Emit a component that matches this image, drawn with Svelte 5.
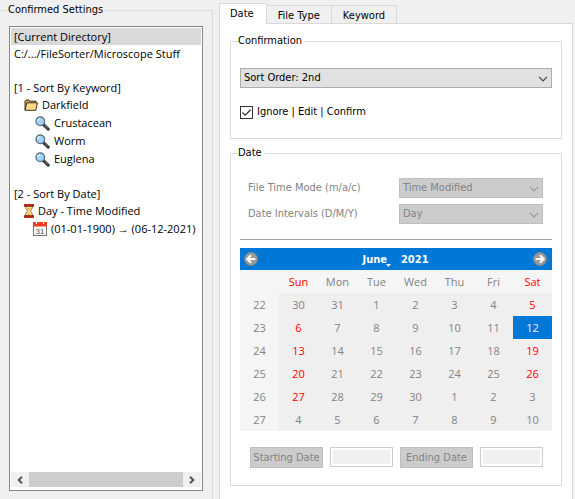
<script>
  const tree = [
    { text: '[Current Directory]', selected: true },
    { text: 'C:/.../FileSorter/Microscope Stuff' },
    { text: '' },
    { text: '[1 - Sort By Keyword]' },
    { text: 'Darkfield', icon: 'folder', level: 1 },
    { text: 'Crustacean', icon: 'search', level: 2 },
    { text: 'Worm', icon: 'search', level: 2 },
    { text: 'Euglena', icon: 'search', level: 2 },
    { text: '' },
    { text: '[2 - Sort By Date]' },
    { text: 'Day - Time Modified', icon: 'hourglass', level: 1 },
    { text: '(01-01-1900) → (06-12-2021)', icon: 'calendar', level: 2 }
  ];
  const tabs = ['Date', 'File Type', 'Keyword'];
  let activeTab = $state('Date');
  let confirmed = $state(true);

  const dayNames = ['Sun', 'Mon', 'Tue', 'Wed', 'Thu', 'Fri', 'Sat'];
  const first = new Date(2021, 4, 30);
  const weeks = Array.from({ length: 6 }, (_, w) => ({
    number: 22 + w,
    days: Array.from({ length: 7 }, (_, d) => {
      const date = new Date(first.getFullYear(), first.getMonth(), first.getDate() + w * 7 + d);
      const inMonth = date.getMonth() === 5;
      return {
        day: date.getDate(),
        weekend: inMonth && (d === 0 || d === 6),
        selected: inMonth && date.getDate() === 12
      };
    })
  }));
</script>

{#snippet chevron()}
  <svg class="chevron" viewBox="0 0 10 6" aria-hidden="true"><path d="M1 .8 5 4.8 9 .8" /></svg>
{/snippet}

<main>
  <fieldset class="settings">
    <legend>Confirmed Settings</legend>
    <div class="listbox">
      <ul>
        {#each tree as row}
          <li class={[row.icon && 'with-icon', row.level && `level-${row.level}`, row.selected && 'selected']}>
            {#if row.icon === 'folder'}
              <svg class="folder" viewBox="0 0 14 12" aria-hidden="true">
                <path d="M1 11V2.2L2 1h3.2l1 1.2H12V4" fill="#d9a441" stroke="#3a3226" />
                <path d="M1 11.3 2.8 3.8h10.7L11.8 11.3z" fill="#ffd983" stroke="#3a3226" />
              </svg>
            {:else if row.icon === 'search'}
              <svg class="search" viewBox="0 0 15 15" aria-hidden="true">
                <path d="m8.2 8.4 5 4.8" stroke="#34383d" stroke-width="3" stroke-linecap="round" />
                <path d="m9.8 9.4 3 2.8" stroke="#7b838a" stroke-width="1" />
                <circle cx="5.3" cy="5.3" r="4.3" fill="#9fd3fa" stroke="#5d7384" stroke-width="1.3" />
                <path d="M2.8 5.2A2.6 2.6 0 0 1 5.2 2.7" fill="none" stroke="#e2f4ff" stroke-width="1.2" />
              </svg>
            {:else if row.icon === 'hourglass'}
              <svg class="hourglass" viewBox="0 0 10 14" aria-hidden="true">
                <path d="M1.5 2h7c0 3-1 3.7-2.2 5 1.2 1.3 2.2 2 2.2 5h-7c0-3 1-3.7 2.2-5C2.5 5.700 1.500 5 1.500 2z" fill="#ffe08a" stroke="#69452b" stroke-width=".7" />
                <path d="M3 4.300h4L5 6.700zM2.500 11.500 5 8.800l2.500 2.700z" fill="#f0b030" />
                <path d="M0 0h10v2.500H0zM0 11.500h10V14H0z" fill="#c72a1c" />
                <path d="M0 2.200h10M0 11.800h10" stroke="#57201a" stroke-width=".7" />
              </svg>
            {:else if row.icon === 'calendar'}
              <svg class="cal" viewBox="0 0 14 14" aria-hidden="true">
                <rect x=".5" y=".5" width="13" height="13" fill="#fafafa" stroke="#77716f" />
                <path d="M0 0h14v4.500H0z" fill="#ee3e22" />
                <path d="M3.500 0v2M10.500 0v2" stroke="#fff" />
                <text x="7" y="12" text-anchor="middle">31</text>
              </svg>
            {/if}
            <span>{row.text}</span>
          </li>
        {/each}
      </ul>
      <div class="scrollbar">
        <button aria-label="Scroll left"><svg viewBox="0 0 6 8" aria-hidden="true"><path d="M5 .7 1.700 4 5 7.300" /></svg></button>
        <div class="thumb"></div>
        <button aria-label="Scroll right"><svg viewBox="0 0 6 8" aria-hidden="true"><path d="M1 .7 4.300 4 1 7.300" /></svg></button>
      </div>
    </div>
  </fieldset>

  <section class="notebook">
    <div class="tabs" role="tablist">
      {#each tabs as tab}
        <button role="tab" aria-selected={activeTab === tab} class:active={activeTab === tab} onclick={() => (activeTab = tab)}>{tab}</button>
      {/each}
    </div>

    <div class="pane" role="tabpanel">
      <fieldset class="group confirmation">
        <legend>Confirmation</legend>
        <div class="select">
          <select aria-label="Sort order"><option>Sort Order: 2nd</option></select>
          {@render chevron()}
        </div>
        <label class="check">
          <input type="checkbox" bind:checked={confirmed} />
          <span>Ignore | Edit | Confirm</span>
        </label>
      </fieldset>

      <fieldset class="group date">
        <legend>Date</legend>
        <div class="field">
          <label for="mode">File Time Mode (m/a/c)</label>
          <div class="select">
            <select id="mode" disabled><option>Time Modified</option></select>
            {@render chevron()}
          </div>
        </div>
        <div class="field">
          <label for="interval">Date Intervals (D/M/Y)</label>
          <div class="select">
            <select id="interval" disabled><option>Day</option></select>
            {@render chevron()}
          </div>
        </div>
        <hr />
        <div class="calendar">
          <header>
            <button aria-label="Previous month">
              <svg viewBox="0 0 14 14" aria-hidden="true">
                <circle cx="7" cy="7" r="6.500" fill="#9a9a9a" stroke="#7e858c" />
                <path d="M11.300 7H3.500M7 3.300 3.300 7 7 10.700" fill="none" stroke="#fff" stroke-width="2" />
              </svg>
            </button>
            <div class="title">
              <button>June<svg class="drop" viewBox="0 0 5 3" aria-hidden="true"><path d="M0 0h5L2.500 3z" fill="#fff" /></svg></button>
              <button>2021</button>
            </div>
            <button aria-label="Next month">
              <svg viewBox="0 0 14 14" aria-hidden="true">
                <circle cx="7" cy="7" r="6.500" fill="#9a9a9a" stroke="#7e858c" />
                <path d="M2.700 7h7.800M7 3.300 10.700 7 7 10.700" fill="none" stroke="#fff" stroke-width="2" />
              </svg>
            </button>
          </header>
          <table>
            <thead>
              <tr>
                <td></td>
                {#each dayNames as name, i}
                  <th scope="col" class:weekend={i === 0 || i === 6}>{name}</th>
                {/each}
              </tr>
            </thead>
            <tbody>
              {#each weeks as week}
                <tr>
                  <th scope="row">{week.number}</th>
                  {#each week.days as d}
                    <td class:weekend={d.weekend} class:selected={d.selected}>{d.day}</td>
                  {/each}
                </tr>
              {/each}
            </tbody>
          </table>
        </div>
        <div class="range">
          <button disabled>Starting Date</button>
          <input type="text" aria-label="Starting date" disabled />
          <button disabled>Ending Date</button>
          <input type="text" aria-label="Ending date" disabled />
        </div>
      </fieldset>
    </div>
  </section>
</main>

<style>
  :global(body) {
    margin: 0;
    background: #f0f0f0;
  }
  main {
    box-sizing: border-box;
    display: flex;
    gap: 6px;
    min-height: 100vh;
    padding: 3px 2px 0 0;
    color: #000;
    font: 11px/14px "DejaVu Sans Condensed", "DejaVu Sans", sans-serif;
  }
  main * {
    box-sizing: border-box;
  }
  button,
  select,
  input {
    margin: 0;
    padding: 0;
    border: 0;
    border-radius: 0;
    background: none;
    color: inherit;
    font: inherit;
  }
  fieldset {
    min-width: 0;
    margin: 0;
    border: 1px solid #dcdcdc;
  }
  legend {
    padding: 0 2px 0 0;
  }

  .settings {
    flex: 0 0 213px;
    display: flex;
    padding: 9px 9px 8px;
    border-width: 1px 1px 0 0;
  }
  .settings legend {
    margin-left: -1px;
  }
  .listbox {
    flex: 1;
    min-width: 0;
    display: flex;
    flex-direction: column;
    padding: 1px;
    border: 1px solid #828790;
    background: #fff;
  }
  ul {
    flex: 1;
    margin: 0;
    padding: 0;
    list-style: none;
    overflow: hidden;
    font: 11px/14px "Open Sans", "Noto Sans", sans-serif;
  }
  li {
    display: flex;
    align-items: center;
    gap: 4px;
    height: 17px;
    padding-left: 3px;
    white-space: nowrap;
  }
  li svg {
    flex: none;
  }
  .with-icon {
    height: 18px;
  }
  .level-1 {
    padding-left: 13px;
  }
  .level-2 {
    padding-left: 22px;
  }
  .selected {
    background: #d9d9d9;
  }
  .folder {
    width: 14px;
    height: 12px;
  }
  .search {
    width: 15px;
    height: 15px;
    margin-left: 2px;
  }
  .hourglass {
    width: 10px;
    height: 14px;
  }
  .cal {
    width: 14px;
    height: 14px;
  }
  .cal text {
    font: 8px "Liberation Sans", sans-serif;
    fill: #555;
  }
  .scrollbar {
    display: flex;
    height: 15px;
    margin-bottom: 2px;
    background: #f0f0f0;
  }
  .scrollbar button {
    flex: 0 0 18px;
    display: grid;
    place-items: center;
  }
  .scrollbar svg {
    width: 6px;
    height: 8px;
    fill: none;
    stroke: #555;
    stroke-width: 2;
  }
  .thumb {
    flex: 1;
    background: #cdcdcd;
  }

  .notebook {
    flex: 1;
    min-width: 0;
    display: flex;
    flex-direction: column;
  }
  .tabs {
    display: flex;
    align-items: flex-end;
    height: 20px;
  }
  .tabs button {
    height: 18px;
    padding: 2px 11px 0;
    border: 1px solid #d9d9d9;
    border-width: 1px 1px 0 0;
  }
  .tabs .active {
    z-index: 1;
    height: 21px;
    margin-bottom: -1px;
    padding: 0 12px 0 10px;
    border-left-width: 1px;
    background: #fff;
  }
  .pane {
    flex: 1;
    display: flex;
    flex-direction: column;
    gap: 7px;
    padding: 10px 10px 12px;
    border: 1px solid #d9d9d9;
    border-bottom: 0;
    background: #fff;
  }
  .group {
    padding: 0 9px;
  }
  .group legend {
    margin-left: -2px;
  }
  .confirmation {
    height: 105px;
    padding-top: 20px;
  }
  .select {
    position: relative;
  }
  select {
    display: block;
    width: 100%;
    height: 20px;
    padding: 0 20px 0 3px;
    border: 1px solid #adadad;
    background: #e1e1e1;
    appearance: none;
  }
  select:disabled {
    border-color: #bfbfbf;
    background: #ccc;
    color: #838383;
    opacity: 1;
  }
  .chevron {
    position: absolute;
    top: 8px;
    right: 4px;
    width: 10px;
    height: 6px;
    fill: none;
    stroke: #444;
    stroke-width: 1.2;
    pointer-events: none;
  }
  select:disabled + .chevron {
    stroke: #999;
  }
  .check {
    display: flex;
    align-items: center;
    gap: 4px;
    width: max-content;
    margin-top: 17px;
  }
  .check input {
    width: 13px;
    height: 13px;
    border: 1px solid #333;
    background: #fff;
    appearance: none;
  }
  .check input:checked {
    background: #fff url("data:image/svg+xml,%3Csvg xmlns='http://www.w3.org/2000/svg' viewBox='0 0 11 11'%3E%3Cpath d='M1.500 5.500 4.200 8.200 9.700 2.700' fill='none' stroke='%23333' stroke-width='1.300'/%3E%3C/svg%3E");
  }
  .date {
    padding-top: 18px;
    padding-bottom: 17px;
  }
  .field {
    display: flex;
    align-items: center;
    margin: 0 9px 6px 8px;
    color: #838383;
  }
  .field label {
    flex: 1;
  }
  .field .select {
    flex: 0 0 144px;
  }
  hr {
    height: 1px;
    margin: 15px 0 8px;
    border: 0;
    background: #a0a0a0;
  }
  .calendar header {
    display: flex;
    align-items: center;
    justify-content: space-between;
    height: 22px;
    padding: 0 5px 0 4px;
    background: #0078d7;
    color: #fff;
    font-weight: bold;
  }
  .calendar header svg {
    display: block;
    width: 14px;
    height: 14px;
  }
  .title {
    display: flex;
    gap: 14px;
    padding-top: 2px;
  }
  .title button {
    position: relative;
  }
  .calendar header .drop {
    position: absolute;
    right: -4px;
    bottom: 0;
    width: 5px;
    height: 3px;
  }
  table {
    width: 100%;
    border-collapse: collapse;
    table-layout: fixed;
    color: #838383;
    font: 11px/14px "Open Sans", "Noto Sans", sans-serif;
    text-align: center;
  }
  th,
  td {
    height: 23px;
    padding: 0;
    font-weight: normal;
  }
  th,
  thead td {
    background: #f5f5f5;
  }
  tbody td {
    background: #efefef;
  }
  th.weekend,
  td.weekend {
    color: #f00;
  }
  tbody td.selected {
    background: #0078d7;
    color: #f0f0f0;
  }
  .range {
    display: flex;
    gap: 7px;
    margin: 16px 9px 0 10px;
  }
  .range button {
    flex: 0 0 73px;
    height: 21px;
    border: 1px solid #bfbfbf;
    background: #ccc;
    color: #838383;
    white-space: nowrap;
  }
  .range input {
    flex: 1;
    min-width: 0;
    height: 20px;
    padding: 2px;
    border: 1px solid #ccc;
    background: #f0f0f0 content-box;
  }
</style>
